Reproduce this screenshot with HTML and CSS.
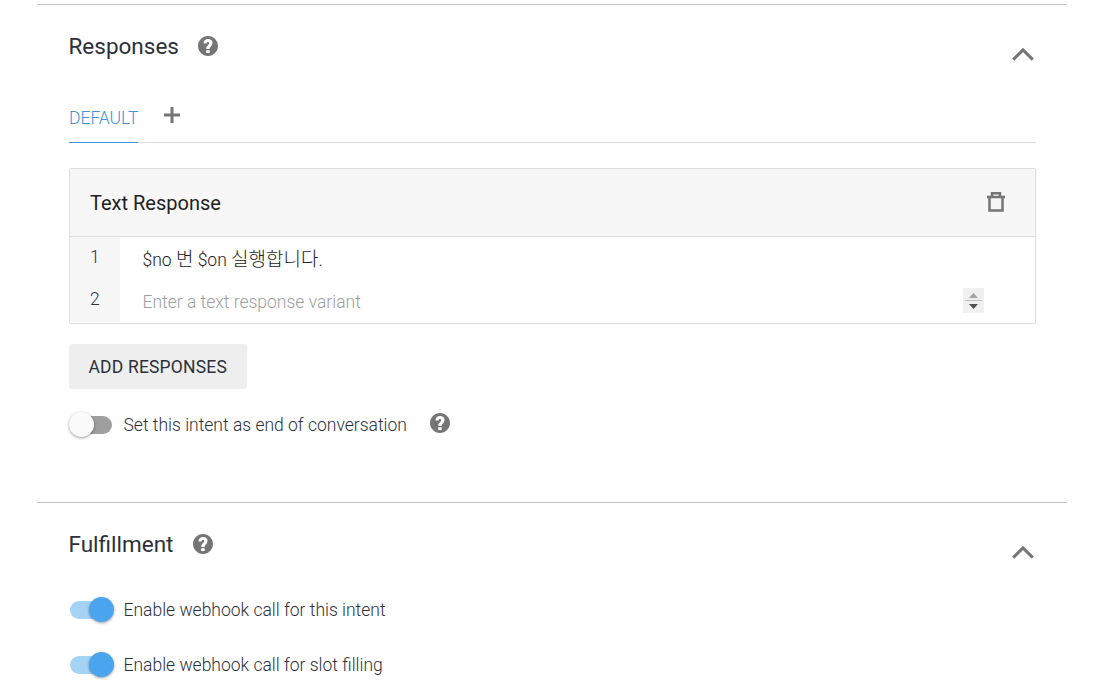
FILE: index.html
```
<!DOCTYPE html>
<html lang="en">
    <head>
        <meta charset="utf-8">
        <title>Intent</title>
        <link rel="stylesheet" href="styles.css">
    </head>
    <body>
        <svg class="defs">
            <symbol id="help" viewBox="2 2 20 20">
                <path d="M12 2C6.480 2 2 6.480 2 12s4.480 10 10 10 10-4.480 10-10S17.520 2 12 2zm1.700 17h-3.500v-2.700h3.500V19zm1.600-7l-.9.900C13.800 13.500 13.700 14 13.700 15h-3.400v-.6c0-1.200.4-2 1.100-2.700l1.200-1.200c.3-.3.5-.8.5-1.200 0-.8-.4-1.300-1.200-1.300s-1.300.5-1.300 1.400H7.500C7.500 6.600 9.400 5 12 5s4.500 1.600 4.500 3.800c0 1.200-.4 2.100-1.200 3.200z"/>
            </symbol>
            <symbol id="chevron" viewBox="0 0 22 13">
                <path d="M1.200 11.600L11 1.900l9.800 9.700" fill="none" stroke="#757575" stroke-width="3"/>
            </symbol>
        </svg>

        <div class="section responses">
            <div class="section-header">
                <h2>Responses</h2>
                <svg class="help"><use href="#help"/></svg>
                <svg class="chevron"><use href="#chevron"/></svg>
            </div>
            <div class="tabs">
                <div class="tab active">DEFAULT</div>
                <svg class="plus" viewBox="0 0 16 16"><path d="M8 0v16M0 8h16"/></svg>
            </div>
            <div class="card">
                <div class="card-header">
                    <h3>Text Response</h3>
                    <svg class="trash" viewBox="0 0 18 20">
                        <path d="M2.500 5v13.500h13V5M0 5h18M5 4V1.200h8V4"/>
                    </svg>
                </div>
                <div class="row">
                    <div class="num">1</div>
                    <div class="variant">$no <span lang="ko">번</span> $on <span lang="ko">실행합니다</span>.</div>
                </div>
                <div class="row">
                    <div class="num">2</div>
                    <div class="variant placeholder">Enter a text response variant</div>
                    <svg class="spinner" viewBox="0 0 21 25">
                        <path d="M0 0h21v25H0z" fill="#f0f0f0"/>
                        <path d="M6 10l4.500-5 4.500 5z" fill="#a3a3a3"/>
                        <path d="M2 12h17v1H2z" fill="#c1c1c1"/>
                        <path d="M6 16l4.500 5 4.500-5z" fill="#505050"/>
                    </svg>
                </div>
            </div>
            <div class="btn">ADD RESPONSES</div>
            <div class="option end">
                <div class="switch"></div>
                <span>Set this intent as end of conversation</span>
                <svg class="help"><use href="#help"/></svg>
            </div>
        </div>

        <div class="section">
            <div class="section-header">
                <h2>Fulfillment</h2>
                <svg class="help"><use href="#help"/></svg>
                <svg class="chevron"><use href="#chevron"/></svg>
            </div>
            <div class="option">
                <div class="switch on"></div>
                <span>Enable webhook call for this intent</span>
            </div>
            <div class="option">
                <div class="switch on"></div>
                <span>Enable webhook call for slot filling</span>
            </div>
        </div>
    </body>
</html>
```
FILE: styles.css
```
* {
    box-sizing: border-box;
}
body {
    margin: 4px 35px 0 37px;
    font-family: Roboto, 'Noto Sans CJK KR', sans-serif;
    font-size: 17.5px;
    font-weight: 300;
    color: #2b303b;
    background-color: #fff;
    overflow: hidden;
}
h2, h3 {
    margin: 0;
    font-weight: 400;
}
.defs {
    display: none;
}
.section {
    padding: 0 31px 0 32px;
    border-top: 1px solid #c8c4c6;
}
.responses {
    height: 498px;
}
.section-header {
    display: flex;
    align-items: center;
    height: 82px;
}
h2 {
    margin-left: -0.5px;
    font-size: 22.5px;
}
.help {
    width: 20px;
    height: 20px;
    margin-left: 19.5px;
    fill: #757575;
}
.chevron {
    width: 22px;
    height: 13px;
    margin: 16px 2px 0 auto;
}
.tabs {
    display: flex;
    height: 56px;
    border-bottom: 1px solid #dcdcdc;
}
.tab {
    height: 56px;
    line-height: 63px;
}
.tab.active {
    color: #4192d9;
    border-bottom: 1px solid #4192d9;
}
.plus {
    width: 16px;
    height: 16px;
    margin: 20px 0 0 26px;
    stroke: #757575;
    stroke-width: 3;
}
.card {
    height: 156px;
    margin-top: 25px;
    border: 1px solid #dedede;
    border-radius: 2px;
}
.card-header {
    display: flex;
    align-items: center;
    justify-content: space-between;
    height: 68px;
    padding: 0 30px 0 20px;
    background-color: #f7f7f7;
    border-bottom: 1px solid #dedede;
}
h3 {
    font-size: 20px;
    color: #212121;
}
.trash {
    width: 18px;
    height: 20px;
    margin-top: -1px;
    fill: none;
    stroke: #757575;
    stroke-width: 2.500;
}
.row {
    display: flex;
    align-items: center;
    height: 42.5px;
}
.num {
    width: 50px;
    height: 100%;
    padding-left: 20px;
    line-height: 40px;
    background-color: #f7f7f7;
}
.row:last-child .num {
    line-height: 38px;
}
.variant {
    flex: 1;
    padding: 4px 0 0 22.5px;
    line-height: 40px;
    color: #212121;
}
.variant span {
    font-size: 19px;
    line-height: 1;
}
.variant.placeholder {
    padding-top: 2px;
    color: #9e9e9e;
}
.spinner {
    width: 21px;
    height: 25px;
    margin-right: 51px;
}
.btn {
    width: 178px;
    height: 45px;
    margin-top: 20px;
    padding-left: 19.5px;
    line-height: 46px;
    font-weight: 400;
    letter-spacing: 0.18px;
    background-color: #eee;
    border-radius: 3px;
}
.option {
    display: flex;
    align-items: center;
    height: 55px;
}
.option.end {
    margin-top: 8px;
}
.option.end .help {
    margin: -3px 0 0 23px;
}
.section-header + .option {
    margin-top: -3px;
}
.switch {
    display: flex;
    align-items: center;
    width: 37px;
    height: 18px;
    margin: 0 11.5px 0 6px;
    border-radius: 9px;
    background-color: #9e9e9e;
}
.switch::before {
    content: '';
    width: 25px;
    height: 25px;
    flex: none;
    margin-left: -6px;
    border-radius: 50%;
    background-color: #fafafa;
    box-shadow: 0 1px 3px rgba(0, 0, 0, 0.4);
}
.switch.on {
    width: 42px;
    margin: 0 11.5px 0 1px;
    background-color: #a5d3f6;
}
.switch.on::before {
    margin-left: 19px;
    background-color: #4ba5ee;
}
```
